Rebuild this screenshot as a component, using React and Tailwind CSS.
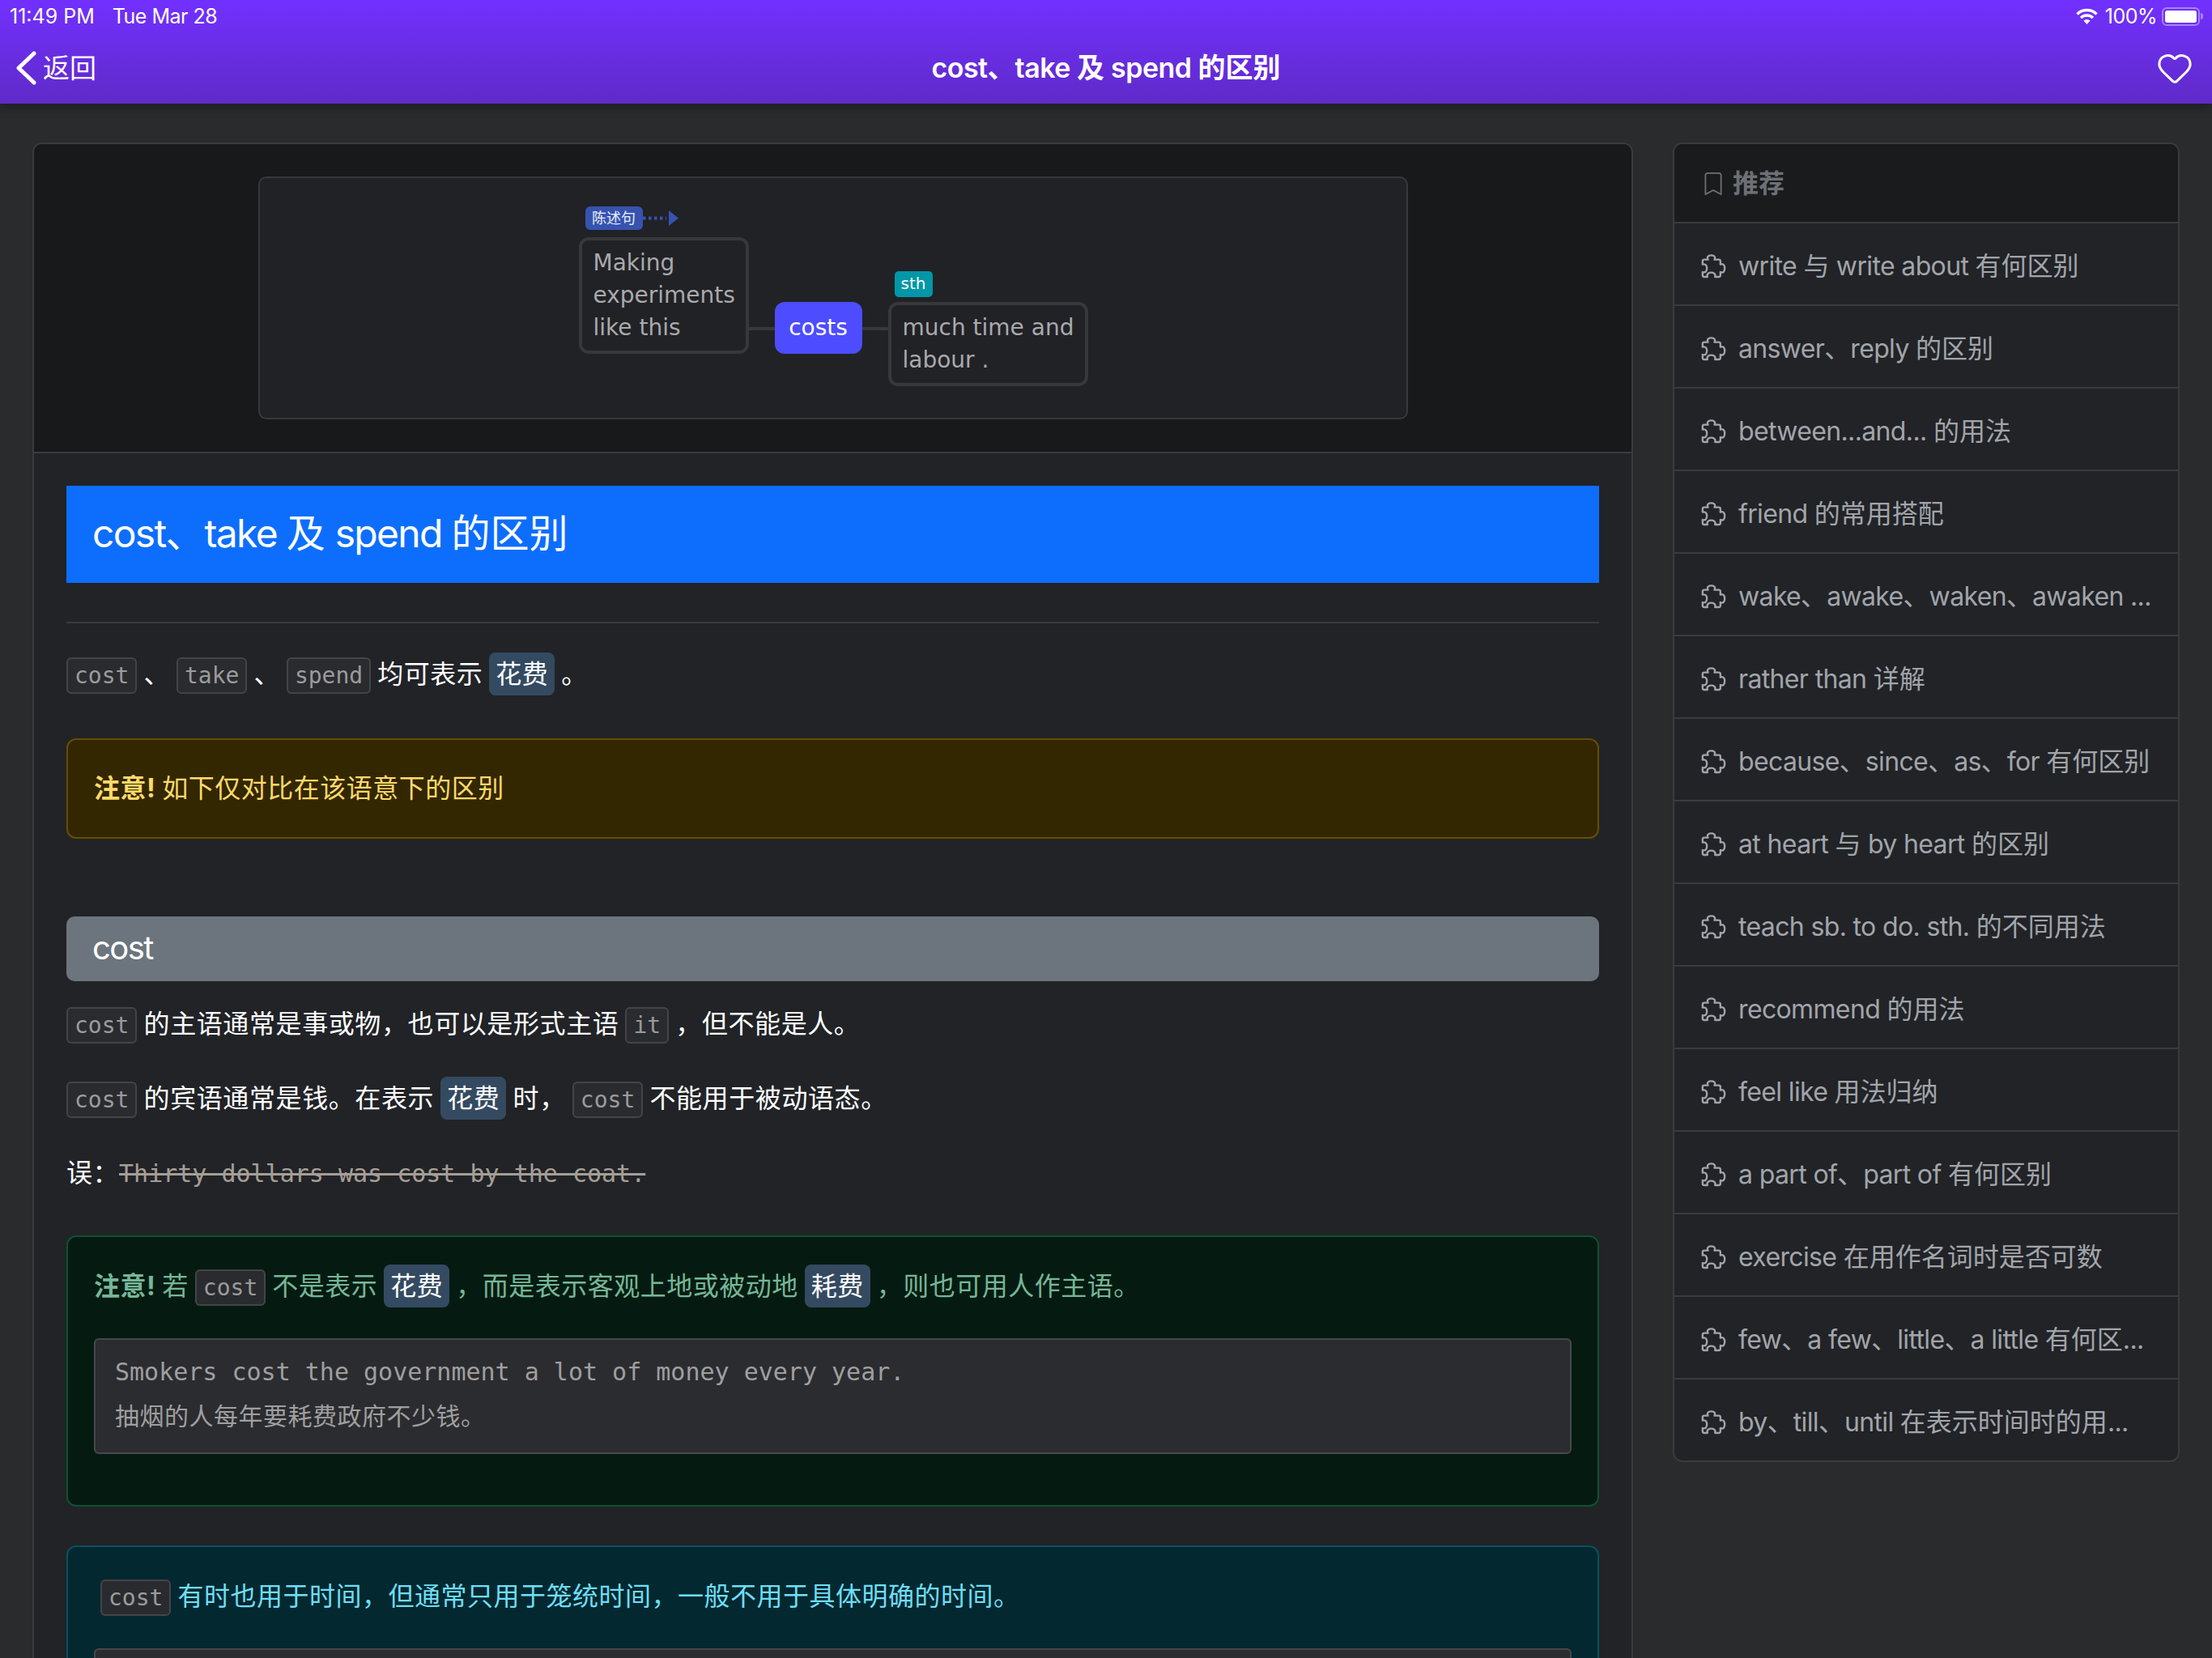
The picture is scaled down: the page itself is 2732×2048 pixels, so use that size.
import React from "react";
import { BsBookmark } from "react-icons/bs";
import { Heart } from "lucide-react";

const recommend = [
  "write 与 write about 有何区别",
  "answer、reply 的区别",
  "between...and... 的用法",
  "friend 的常用搭配",
  "wake、awake、waken、awaken ...",
  "rather than 详解",
  "because、since、as、for 有何区别",
  "at heart 与 by heart 的区别",
  "teach sb. to do. sth. 的不同用法",
  "recommend 的用法",
  "feel like 用法归纳",
  "a part of、part of 有何区别",
  "exercise 在用作名词时是否可数",
  "few、a few、little、a little 有何区...",
  "by、till、until 在表示时间时的用...",
];

// Inter runs a bit wider than the latin in the screenshot, tighten only the latin runs
function Latin({ text, tight = "tracking-[-0.02em]" }) {
  return text.split(/([A-Za-z. ]+)/).map((part, i) =>
    i % 2 ? <span key={i} className={tight}>{part}</span> : part
  );
}

function Puzzle() {
  return (
    <svg className="shrink-0" width="32" height="30" viewBox="30 40 95 90" fill="none" stroke="currentColor" strokeWidth="7" strokeLinejoin="round">
      <path d="M58 60C52 48 62 44 70 44C78 44 88 48 82 60L98 60Q104 60 104 66L104 78C116 72 120 84 120 92C120 100 116 112 104 106L104 118Q104 124 98 124L84 124C88 112 78 108 70 108C62 108 52 112 56 124L44 124Q38 124 38 118L38 106C50 110 54 100 54 92C54 84 50 74 38 78L38 66Q38 60 44 60Z" />
    </svg>
  );
}

function Wifi() {
  return (
    <svg className="ml-auto" width="27" height="20" viewBox="0 0 27 20" fill="none" stroke="white" strokeWidth="3.4">
      <path d="M1.5 7.5A17 17 0 0 1 25.5 7.5" />
      <path d="M6 12A11 11 0 0 1 21 12" />
      <path d="M13.5 20L9.4 15.6A6 6 0 0 1 17.6 15.6Z" fill="white" stroke="none" />
    </svg>
  );
}

function Code({ children }) {
  return (
    <code className="font-['DejaVu_Sans_Mono',monospace] text-[28px] tracking-normal text-[#9a9b9d] bg-[#2a2b2e] border-2 border-[#434447] rounded-[6px] px-[8px] py-[4px]">
      {children}
    </code>
  );
}

function Mark({ children }) {
  return <span className="bg-[#344a61] text-white rounded-[8px] px-[8px] py-[7px]">{children}</span>;
}

function Example({ en, zh }) {
  return (
    <div className="mt-[38px] h-[143px] bg-[#2b2c2f] border-2 border-[#47484a] rounded-[6px] px-[24px] pt-[13px] text-[#9f9fa0] text-[30px] leading-[54px] tracking-[0.5px]">
      <p className="font-['DejaVu_Sans_Mono',monospace] tracking-normal [word-spacing:normal]">{en}</p>
      <p>{zh}</p>
    </div>
  );
}

function Diagram() {
  return (
    <div className="relative mx-auto w-[1420px] h-[300px] bg-[#212226] border-2 border-[#37383c] rounded-[10px] font-['DejaVu_Sans','Noto_Sans_CJK_SC',sans-serif] text-[28px] leading-[40px] text-[#a9aaac]">
      <span className="absolute left-[402px] top-[35px] w-[71px] h-[29px] bg-[#3653b0] rounded-[6px] text-white/90 text-[18px] leading-[29px] text-center">陈述句</span>
      <svg className="absolute left-[473px] top-[40px]" width="44" height="19" viewBox="0 0 44 19">
        <path d="M0 9.5H29" stroke="#3653b0" strokeWidth="4" strokeDasharray="3.5 3.5" />
        <path d="M32 0L44 9.5L32 19Z" fill="#3653b0" />
      </svg>
      <div className="absolute left-[394px] top-[73px] w-[210px] h-[144px] border-4 border-[#37383c] rounded-[12px] px-[14px] pt-[8px] whitespace-nowrap">
        Making<br />experiments<br />like this
      </div>
      <div className="absolute left-[604px] top-[184px] w-[32px] h-[4px] bg-[#37383c]" />
      <div className="absolute left-[636px] top-[153px] w-[108px] h-[64px] bg-[#4d4dff] rounded-[12px] text-white text-center leading-[64px]">costs</div>
      <div className="absolute left-[744px] top-[184px] w-[32px] h-[4px] bg-[#37383c]" />
      <span className="absolute left-[784px] top-[115px] w-[47px] h-[32px] bg-[#0097a7] rounded-[5px] text-white text-[20px] leading-[30px] text-center">sth</span>
      <div className="absolute left-[776px] top-[153px] w-[247px] h-[104px] border-4 border-[#37383c] rounded-[12px] px-[14px] pt-[8px] whitespace-nowrap">
        much time and<br />labour .
      </div>
    </div>
  );
}

export default function App() {
  return (
    <div className="h-[2048px] overflow-hidden bg-[#2a2b2d] text-white font-['Inter','Noto_Sans_CJK_SC',sans-serif] text-[32px] leading-[48px]">
      {/* top bar */}
      <header className="relative h-[128px] bg-gradient-to-b from-[#7230ff] to-[#5f2ac8] shadow-[0_4px_12px_rgba(0,0,0,0.35)]">
        <div className="flex items-center h-[40px] pl-[12px] pr-[11px] text-[25px] leading-[40px]">
          <span>11:49 PM</span>
          <span className="ml-[22px] tracking-[-0.02em]">Tue Mar 28</span>
          <Wifi />
          <span className="ml-[9px] tracking-[-0.02em]">100%</span>
          <div className="ml-[6px] flex items-center">
            <div className="w-[47px] h-[23px] border-2 border-white/40 rounded-[6px] p-[2px]">
              <div className="w-full h-full bg-white rounded-[3px]" />
            </div>
            <div className="ml-[1px] w-[3px] h-[8px] bg-white/40 rounded-r-[3px]" />
          </div>
        </div>
        <div className="relative flex items-center justify-between h-[88px] pl-[18px] pr-[23px]">
          <div className="flex items-center gap-[7px] text-[33px]">
            <svg width="28" height="42" viewBox="0 0 28 42" fill="none">
              <path d="M24 3L5 21L24 39" stroke="white" strokeWidth="5" strokeLinecap="round" strokeLinejoin="round" />
            </svg>
            <span>返回</span>
          </div>
          <h1 className="absolute left-0 right-0 text-center text-[34px] font-semibold"><Latin text="cost、take 及 spend 的区别" tight="tracking-[-0.015em]" /></h1>
          <Heart size={46} strokeWidth={1.6} />
        </div>
      </header>

      <div className="flex items-start gap-[49px] px-[40px] pt-[48px]">
        {/* article */}
        <main className="w-[1977px] shrink-0 bg-[#212327] border-2 border-[#3a3b3d] rounded-[12px] overflow-hidden">
          <div className="h-[382px] pt-[40px] bg-[#18191b] border-b-2 border-[#3a3b3d]">
            <Diagram />
          </div>

          <div className="px-[40px] pt-[40px] tracking-[0.5px] [word-spacing:-1.5px]">
            <h2 className="h-[120px] bg-[#0d6efd] pl-[32px] text-[48px] leading-[118px] tracking-normal [word-spacing:normal]"><Latin text="cost、take 及 spend 的区别" tight="tracking-[-0.035em]" /></h2>
            <hr className="mt-[48px] border-t-2 border-[#3a3b3d]" />

            <p className="mt-[39px]">
              <Code>cost</Code> 、 <Code>take</Code> 、 <Code>spend</Code> 均可表示 <Mark>花费</Mark> 。
            </p>

            <div className="mt-[53px] h-[124px] bg-[#332701] border-2 border-[#664d03] rounded-[12px] pl-[32px] pt-[36px] text-[#ffda6a]">
              <b>注意!</b> 如下仅对比在该语意下的区别
            </div>

            <h3 className="mt-[96px] h-[80px] bg-[#6c757d] rounded-[10px] pl-[32px] text-[40px] leading-[78px] tracking-[-0.04em]">cost</h3>

            <p className="mt-[29px] tracking-[0.6px]">
              <Code>cost</Code> 的主语通常是事或物，也可以是形式主语 <Code>it</Code> ，但不能是人。
            </p>
            <p className="mt-[42px] tracking-[0.6px]">
              <Code>cost</Code> 的宾语通常是钱。在表示 <Mark>花费</Mark> 时， <Code>cost</Code> 不能用于被动语态。
            </p>
            <p className="mt-[42px]">
              误：<span className="font-['DejaVu_Sans_Mono',monospace] text-[30px] tracking-normal [word-spacing:normal] text-[#a59e96] line-through">Thirty dollars was cost by the coat.</span>
            </p>

            <div className="mt-[52px] h-[335px] bg-[#051b11] border-2 border-[#0f5132] rounded-[12px] px-[32px] pt-[37px] text-[#75b798]">
              <b>注意!</b> 若 <Code>cost</Code> 不是表示 <Mark>花费</Mark> ，而是表示客观上地或被动地 <Mark>耗费</Mark> ，则也可用人作主语。
              <Example en="Smokers cost the government a lot of money every year." zh="抽烟的人每年要耗费政府不少钱。" />
            </div>

            <div className="mt-[48px] h-[335px] bg-[#032830] border-2 border-[#055160] rounded-[12px] px-[32px] pt-[37px] text-[#6edff6]">
              <span className="ml-[8px]" /><Code>cost</Code> 有时也用于时间，但通常只用于笼统时间，一般不用于具体明确的时间。
              <Example en="" zh="" />
            </div>
          </div>
        </main>

        {/* sidebar */}
        <aside className="w-[626px] shrink-0 bg-[#212327] border-2 border-[#3a3b3d] rounded-[12px] overflow-hidden">
          <div className="flex items-center h-[96px] pl-[34px] pt-[2px] gap-[10px] bg-[#1a1b1d] font-bold text-[#6c7074]">
            <BsBookmark className="text-[28px]" />
            <span>推荐</span>
          </div>
          {recommend.map((title) => (
            <div key={title} className="flex items-center h-[102px] pl-[32px] gap-[15px] pt-[5px] border-t-2 border-[#3a3b3d] text-[#a1a5aa] whitespace-nowrap">
              <Puzzle />
              <span><Latin text={title} /></span>
            </div>
          ))}
        </aside>
      </div>
    </div>
  );
}
